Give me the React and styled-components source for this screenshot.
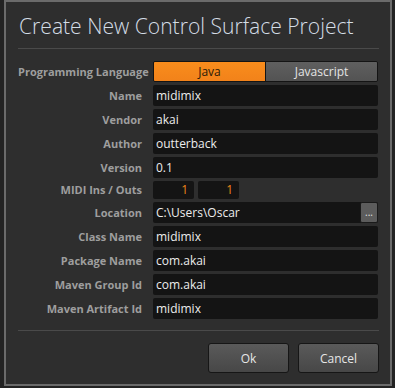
import React from 'react';
import styled, { createGlobalStyle } from 'styled-components';

const GlobalStyle = createGlobalStyle`
  html, body {
    margin: 0;
    padding: 0;
    background: #232323;
    font-family: 'Open Sans', 'Liberation Sans', sans-serif;
  }
`;

const fields = [
  { label: 'Name', value: 'midimix' },
  { label: 'Vendor', value: 'akai' },
  { label: 'Author', value: 'outterback' },
  { label: 'Version', value: '0.1' },
];

const fieldsAfter = [
  { label: 'Class Name', value: 'midimix' },
  { label: 'Package Name', value: 'com.akai' },
  { label: 'Maven Group Id', value: 'com.akai' },
  { label: 'Maven Artifact Id', value: 'midimix' },
];

function App() {
  return (
    <>
      <GlobalStyle />
      <Dialog>
        <Title>Create New Control Surface Project</Title>
        <Rule />
        <Form>
          <Label>Programming Language</Label>
          <Toggle>
            <ToggleOption active>Java</ToggleOption>
            <ToggleOption>Javascript</ToggleOption>
          </Toggle>

          {fields.map(({ label, value }) => (
            <React.Fragment key={label}>
              <Label>{label}</Label>
              <Field>{value}</Field>
            </React.Fragment>
          ))}

          <Label small>MIDI Ins / Outs</Label>
          <MidiRow>
            <NumberBox>1</NumberBox>
            <NumberBox>1</NumberBox>
          </MidiRow>

          <Label>Location</Label>
          <Field>
            C:\Users\Oscar
            <BrowseButton>...</BrowseButton>
          </Field>

          {fieldsAfter.map(({ label, value }) => (
            <React.Fragment key={label}>
              <Label>{label}</Label>
              <Field>{value}</Field>
            </React.Fragment>
          ))}
        </Form>
        <Rule bottom />
        <Actions>
          <Button>Ok</Button>
          <Button>Cancel</Button>
        </Actions>
      </Dialog>
    </>
  );
}

const Dialog = styled.div`
  box-sizing: border-box;
  margin-left: 4px;
  width: 388px;
  height: 386px;
  border: 2px solid #6b6b6b;
  background: #2e2e2e;
  padding: 9px 11px 0 12px;
  display: flex;
  flex-direction: column;
`;

const Title = styled.h1`
  margin: 0 0 0 1px;
  font-family: 'Open Sans', sans-serif;
  font-weight: 300;
  font-size: 21.1px;
  line-height: 30px;
  color: #d4dde6;
  white-space: nowrap;
`;

const Rule = styled.div`
  height: 1px;
  background: #4a4a4a;
  margin-top: ${(p) => (p.bottom ? '11px' : '7px')};
`;

const Form = styled.div`
  display: grid;
  grid-template-columns: 124px 225px;
  column-gap: 11px;
  row-gap: 3px;
  margin-top: 12px;
`;

const Label = styled.div`
  text-align: right;
  font-weight: 700;
  font-size: 11px;
  color: #9e9e9e;
  line-height: ${(p) => (p.small ? '18px' : '21px')};
  white-space: nowrap;
`;

const Toggle = styled.div`
  display: flex;
  height: 21px;
  box-sizing: border-box;
  border: 1px solid #141414;
  border-radius: 2px;
  overflow: hidden;
`;

const ToggleOption = styled.div`
  flex: 1;
  display: flex;
  align-items: center;
  justify-content: center;
  font-size: 12px;
  color: ${(p) => (p.active ? '#2a1a08' : '#e4e4e4')};
  background: ${(p) =>
    p.active ? 'linear-gradient(#f98d1c, #f2821a)' : 'linear-gradient(#5f5f5f, #535353)'};
  border-left: ${(p) => (p.active ? 'none' : '1px solid #141414')};
`;

const Field = styled.div`
  position: relative;
  height: 21px;
  box-sizing: border-box;
  background: #141414;
  border-radius: 2px;
  padding-left: 3px;
  font-size: 12px;
  line-height: 21px;
  color: #ececec;
`;

const BrowseButton = styled.div`
  position: absolute;
  top: 0;
  right: 0;
  width: 18px;
  height: 21px;
  box-sizing: border-box;
  background: #5c5c5c;
  border: 1px solid #1a1a1a;
  border-radius: 2px;
  color: #e0e0e0;
  font-size: 10px;
  line-height: 19px;
  text-align: center;
`;

const MidiRow = styled.div`
  display: flex;
  gap: 4px;
`;

const NumberBox = styled.div`
  width: 41px;
  height: 18px;
  box-sizing: border-box;
  background: #141414;
  border-radius: 2px;
  padding-right: 6px;
  text-align: right;
  font-size: 12px;
  line-height: 18px;
  color: #f08418;
`;

const Actions = styled.div`
  display: flex;
  justify-content: flex-end;
  gap: 9px;
  margin-top: 12px;
`;

const Button = styled.button`
  width: 81px;
  height: 30px;
  box-sizing: border-box;
  border: 1px solid #161616;
  border-radius: 3px;
  background: linear-gradient(#5a5a5a, #474747);
  color: #e6e6e6;
  font-family: 'Open Sans', sans-serif;
  font-size: 12px;
  padding: 0;
`;

export default App;
